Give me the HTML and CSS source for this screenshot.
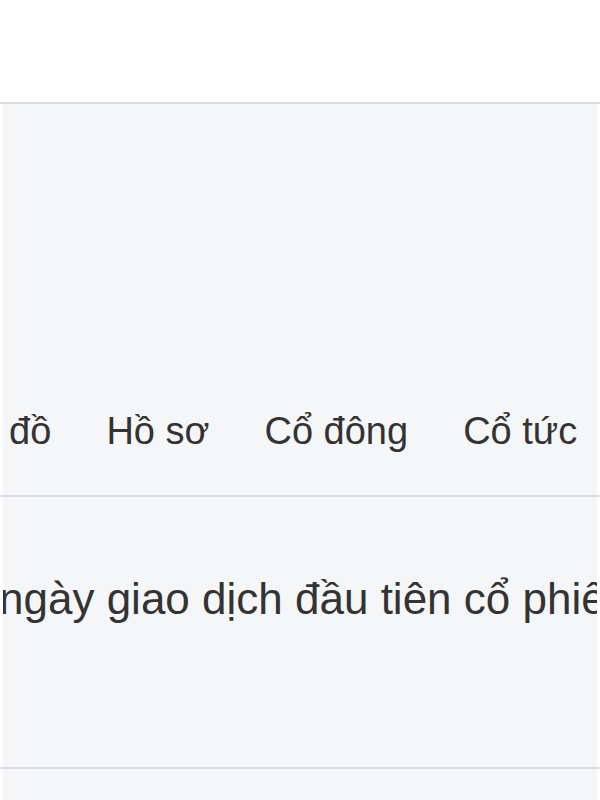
FILE: index.html
```html
<!DOCTYPE html>
<html lang="vi">
<head>
    <meta charset="UTF-8">
    <title>Cổ phiếu</title>
    <link rel="stylesheet" href="styles.css">
</head>
<body>
    <header class="topbar"></header>

    <nav class="tabbar">
        <div class="tabbar-inner">
            <ul class="tabs">
                <li class="tab">Biểu đồ</li>
                <li class="tab">Hồ sơ</li>
                <li class="tab">Cổ đông</li>
                <li class="tab">Cổ tức</li>
                <li class="tab">Tin tức</li>
            </ul>
        </div>
    </nav>

    <section class="info">
        <div class="info-inner">
            <p class="info-text">ngày giao dịch đầu tiên cổ phiếu</p>
        </div>
    </section>

    <section class="info">
        <div class="info-inner"></div>
    </section>
</body>
</html>
```

FILE: styles.css
```css
body {
    margin: 0;
    background: #fff;
    font-family: "Liberation Sans", Arial, sans-serif;
    color: #333;
    overflow: hidden;
}
.topbar {
    height: 102px;
    background: #fff;
}
.tabbar {
    border-top: 2px solid #dadbde;
}
.tabbar-inner {
    margin: 0 3px;
    height: 391px;
    background: #f5f6f8;
    display: flex;
    align-items: flex-end;
    overflow: hidden;
}
.tabs {
    list-style: none;
    margin: 0 0 0 -108px;
    padding: 0 0 42px;
    display: flex;
    white-space: nowrap;
}
.tab {
    padding: 0 27.5px;
    font-size: 38px;
    line-height: 44px;
}
.info {
    border-top: 2px solid #dadbde;
}
.info-inner {
    margin: 0 3px;
    height: 270px;
    background: #f5f6f8;
    overflow: hidden;
}
.info-text {
    margin: 0 0 0 -4px;
    padding-top: 77px;
    font-size: 44px;
    line-height: 50px;
    white-space: nowrap;
}
```
